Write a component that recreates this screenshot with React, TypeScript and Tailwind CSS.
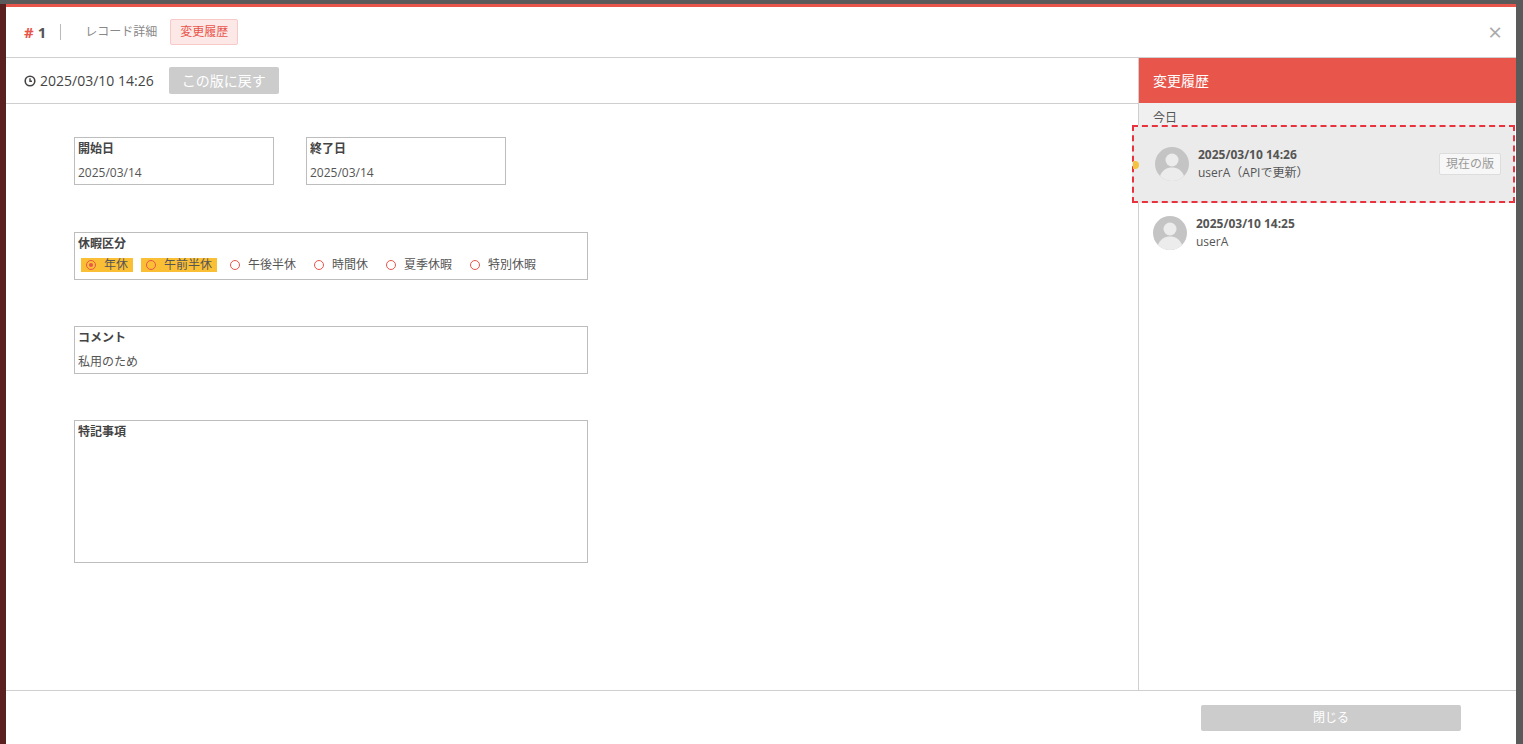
import React from "react";

const Avatar = () => (
  <svg width="34" height="34" viewBox="0 0 34 34">
    <circle cx="17" cy="17" r="17" fill="#c4c4c4" />
    <circle cx="17" cy="13" r="6.5" fill="#ececec" />
    <path d="M5 29c2-6 7-8.5 12-8.5S27 23 29 29a17 17 0 0 1-24 0z" fill="#ececec" />
  </svg>
);

const Radio = ({ on }: { on?: boolean }) => (
  <span className="inline-flex shrink-0 w-[10px] h-[10px] rounded-full border-[1.5px] border-[#e8554a] items-center justify-center">
    {on && <span className="w-[4px] h-[4px] rounded-full bg-[#e8554a]" />}
  </span>
);

export default function App() {
  const opts = [
    { t: "年休", on: true, hl: true },
    { t: "午前半休", hl: true },
    { t: "午後半休" },
    { t: "時間休" },
    { t: "夏季休暇" },
    { t: "特別休暇" },
  ];
  return (
    <div className="w-[1523px] h-[744px] bg-[#5a5a5a] flex pt-[4px] overflow-hidden" style={{ fontFamily: '"Open Sans","Noto Sans CJK JP",sans-serif' }}>
      <div className="w-[6px] bg-[#5a1f1f]" />
      <div className="w-[1510px] bg-white border-t-[3px] border-[#e8554a] flex flex-col">
        <div className="h-[51px] flex items-center px-[18px] border-b border-[#cfcfcf] shrink-0">
          <span className="text-[15px] font-bold text-[#e8554a]">#</span>
          <span className="text-[15px] font-bold text-[#555] ml-[4px]">1</span>
          <span className="w-px h-[16px] bg-[#bbb] ml-[14px]" />
          <span className="text-[12px] text-[#888] ml-[24px]">レコード詳細</span>
          <span className="text-[12px] text-[#e8554a] bg-[#fde8e8] border border-[#f8c9c9] rounded-[2px] px-[9px] py-[3px] ml-[13px]">変更履歴</span>
          <span className="ml-auto text-[24px] text-[#aaa] leading-none mr-[-4px]">×</span>
        </div>
        <div className="flex flex-1 min-h-0">
          <div className="flex-1 flex flex-col">
            <div className="h-[46px] flex items-center px-[18px] border-b border-[#cfcfcf] shrink-0">
              <svg width="12" height="12" viewBox="0 0 12 12"><circle cx="6" cy="6" r="4.8" fill="none" stroke="#444" strokeWidth="1.6"/><path d="M6 3.3V6.3H8" fill="none" stroke="#444" strokeWidth="1.4"/></svg>
              <span className="text-[14px] text-[#444] ml-[4px]">2025/03/10 14:26</span>
              <span className="ml-[15px] bg-[#cccccc] text-white text-[14px] px-[13px] py-[3px] rounded-[2px]">この版に戻す</span>
            </div>
            <div className="pl-[68px] pt-[33px] flex flex-col">
              <div className="flex gap-[32px]">
                {[["開始日", "2025/03/14"], ["終了日", "2025/03/14"]].map(([l, v]) => (
                  <div key={l} className="w-[200px] h-[48px] border border-[#bdbdbd] px-[3px] pt-[2px]">
                    <div className="text-[12px] font-bold text-[#444]">{l}</div>
                    <div className="text-[12px] text-[#555] mt-[6px]">{v}</div>
                  </div>
                ))}
              </div>
              <div className="w-[514px] h-[48px] border border-[#bdbdbd] px-[3px] pt-[2px] mt-[47px]">
                <div className="text-[12px] font-bold text-[#444]">休暇区分</div>
                <div className="flex items-center mt-[5px] gap-[8px] pl-[3px]">
                  {opts.map((o) => (
                    <span key={o.t} className={`flex items-center whitespace-nowrap gap-[8px] text-[12px] leading-[14px] text-[#555] px-[5px] h-[14px] ${o.hl ? "bg-[#fbbf36]" : ""}`}>
                      <Radio on={o.on} />{o.t}
                    </span>
                  ))}
                </div>
              </div>
              <div className="w-[514px] h-[48px] border border-[#bdbdbd] px-[3px] pt-[2px] mt-[46px]">
                <div className="text-[12px] font-bold text-[#444]">コメント</div>
                <div className="text-[12px] text-[#555] mt-[6px]">私用のため</div>
              </div>
              <div className="w-[514px] h-[143px] border border-[#bdbdbd] px-[3px] pt-[2px] mt-[46px]">
                <div className="text-[12px] font-bold text-[#444]">特記事項</div>
              </div>
            </div>
          </div>
          <div className="w-[378px] border-l border-[#cfcfcf] flex flex-col">
            <div className="h-[45px] bg-[#e8554a] text-white text-[14px] flex items-center px-[14px] shrink-0">変更履歴</div>
            <div className="bg-[#f0f0f0] pt-[8px] px-[14px] text-[12px] text-[#555] h-[22px] leading-[14px]">今日</div>
            <div className="relative h-[78px] bg-[#ebebeb] flex items-center border-[2px] border-dashed border-[#e8333f] ml-[-7px] mr-[1px] pl-[21px]">
              <span className="absolute left-[-1px] top-[34px] w-[6px] h-[8px] rounded-r-full bg-[#f5c342]" />
              <Avatar />
              <div className="ml-[9px] text-[12px] text-[#555]">
                <div className="font-bold">2025/03/10 14:26</div>
                <div>userA（APIで更新）</div>
              </div>
              <span className="ml-auto text-[12px] text-[#999] border border-[#ddd] bg-[#f7f7f7] rounded-[2px] px-[6px] py-[1px] mr-[12px]">現在の版</span>
            </div>
            <div className="h-[60px] flex items-center px-[14px]">
              <Avatar />
              <div className="ml-[9px] text-[12px] text-[#555]">
                <div className="font-bold">2025/03/10 14:25</div>
                <div>userA</div>
              </div>
            </div>
          </div>
        </div>
        <div className="h-[54px] border-t border-[#cfcfcf] flex items-center justify-end pr-[55px] shrink-0">
          <span className="w-[260px] h-[26px] bg-[#cccccc] text-white text-[12px] flex items-center justify-center rounded-[2px]">閉じる</span>
        </div>
      </div>
      <div className="flex-1 bg-[#5a5a5a]" />
    </div>
  );
}
